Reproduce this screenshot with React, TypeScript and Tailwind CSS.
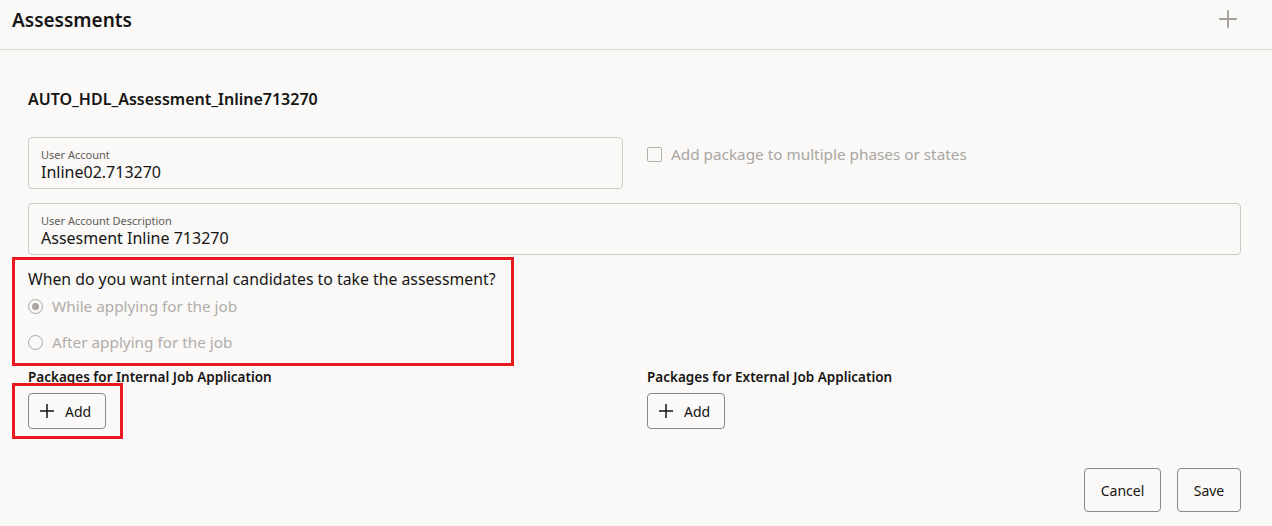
import React from "react";

const font = { fontFamily: '"Noto Sans", "Open Sans", Arial, sans-serif' };

function PlusIcon({ size = 16, className = "" }: { size?: number; className?: string }) {
  return (
    <svg width={size} height={size} viewBox="0 0 16 16" className={className} fill="none" stroke="currentColor" strokeWidth={1.5}>
      <path d="M8 1v14M1 8h14" />
    </svg>
  );
}

function Field({ label, value, className = "" }: { label: string; value: string; className?: string }) {
  return (
    <div className={`flex h-[52px] flex-col justify-start rounded-[4px] border border-[#cfccc8] px-3 pt-[10px] ${className}`}>
      <span className="text-[11px] leading-[14px] text-[#5e5b58]">{label}</span>
      <span className="text-[16px] leading-[20px] text-[#161513]">{value}</span>
    </div>
  );
}

function Radio({ checked, label }: { checked?: boolean; label: string }) {
  return (
    <label className="flex h-9 items-center gap-[9px]">
      <span className="grid h-[15px] w-[15px] place-items-center rounded-full border border-[#a9a6a2]">
        {checked && <span className="h-[7px] w-[7px] rounded-full bg-[#a9a6a2]" />}
      </span>
      <span className="text-[15.3px] text-[#b0adaa]">{label}</span>
    </label>
  );
}

function AddButton() {
  return (
    <button className="flex h-[36px] w-[78px] items-center gap-[10px] rounded-[4px] border border-[#8a8784] bg-[#fbfaf8] pl-[10px] text-[14px] text-[#161513]">
      <PlusIcon size={16} />
      Add
    </button>
  );
}

export default function App() {
  return (
    <div className="relative h-[526px] w-[1272px] overflow-hidden bg-[#faf9f7]" style={font}>
      <header className="flex h-[50px] items-center justify-between border-b border-[#dedbd7] pl-3 pr-[34px]">
        <h1 className="pb-[8px] text-[19px] font-semibold text-[#161513]">Assessments</h1>
        <PlusIcon size={20} className="mb-[12px] text-[#a19e9a]" />
      </header>

      <div className="px-7">
        <h2 className="mt-[39px] text-[16px] font-semibold leading-5 text-[#161513]">AUTO_HDL_Assessment_Inline713270</h2>

        <div className="mt-[28px] flex items-start gap-6">
          <Field label="User Account" value="Inline02.713270" className="w-[595px]" />
          <label className="mt-[6px] flex items-center gap-[9px]">
            <span className="h-[15px] w-[15px] rounded-[2px] border border-[#b5b2ae]" />
            <span className="text-[15.3px] text-[#a9a6a2]">Add package to multiple phases or states</span>
          </label>
        </div>

        <Field label="User Account Description" value="Assesment Inline 713270" className="mt-[14px] mr-[3px]" />

        <div className="mt-[14px]">
          <p className="text-[15.8px] leading-5 text-[#161513]">When do you want internal candidates to take the assessment?</p>
          <div className="-mt-px">
            <Radio checked label="While applying for the job" />
            <Radio label="After applying for the job" />
          </div>
        </div>

        <div className="mt-[7px] grid grid-cols-[619px_1fr]">
          <div>
            <p className="text-[13.5px] font-semibold leading-5 text-[#161513]">Packages for Internal Job Application</p>
            <div className="mt-[6px]"><AddButton /></div>
          </div>
          <div>
            <p className="text-[13.5px] font-semibold leading-5 text-[#161513]">Packages for External Job Application</p>
            <div className="mt-[6px]"><AddButton /></div>
          </div>
        </div>

        <div className="mt-[39px] flex justify-end gap-[16px] pr-[3px]">
          <button className="h-[44px] w-[77px] rounded-[4px] border border-[#8a8784] text-[14px] text-[#161513]">Cancel</button>
          <button className="h-[44px] w-[64px] rounded-[4px] border border-[#8a8784] text-[14px] text-[#161513]">Save</button>
        </div>
      </div>

      {/* annotation overlays */}
      <div className="pointer-events-none absolute left-[12px] top-[257px] h-[109px] w-[502px] border-[3px] border-[#e8191f]" />
      <div className="pointer-events-none absolute left-[12px] top-[383px] h-[56px] w-[111px] border-[3px] border-[#e8191f]" />
    </div>
  );
}
